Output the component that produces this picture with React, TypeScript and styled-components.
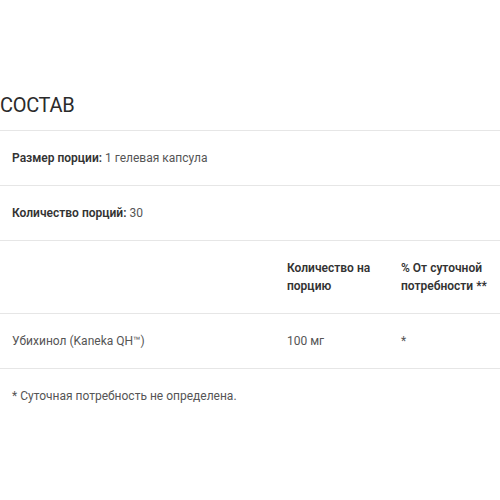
import React from 'react';
import styled, { createGlobalStyle } from 'styled-components';

const GlobalStyle = createGlobalStyle`
    body {
        margin: 0;
        background: #ffffff;
        font-family: Roboto, "Noto Sans", "Liberation Sans", sans-serif;
        color: #333333;
    }
`;

const Section = styled.section`
    width: 500px;
    padding-top: 92px;
`;

const Title = styled.h2`
    margin: 0;
    padding-bottom: 12px;
    font-size: 20px;
    line-height: 26px;
    font-weight: 400;
    color: #2b2b2b;
    letter-spacing: -0.3px;
    border-bottom: 1px solid #e6e6e6;
`;

const InfoRow = styled.div`
    padding: 18px 12px;
    font-size: 12px;
    line-height: 18px;
    color: #555555;
    border-bottom: 1px solid #e6e6e6;
`;

const Label = styled.b`
    font-weight: 600;
    color: #333333;
`;

const TableRow = styled.div<{ $head?: boolean }>`
    display: grid;
    grid-template-columns: 275px 114px 1fr;
    padding: 18px 0;
    font-size: 12px;
    line-height: 18px;
    font-weight: ${p => (p.$head ? 600 : 400)};
    color: ${p => (p.$head ? '#333333' : '#555555')};
    border-bottom: 1px solid #e6e6e6;
`;

const Cell = styled.div`
    padding: 0 12px;
`;

const Note = styled.p`
    margin: 0;
    padding: 18px 12px;
    font-size: 12px;
    line-height: 18px;
    color: #555555;
`;

const rows = [
    { name: 'Убихинол (Kaneka QH™)', amount: '100 мг', dv: '*' },
];

const App = () => {
    return (
        <Section>
            <GlobalStyle />
            <Title>СОСТАВ</Title>
            <InfoRow><Label>Размер порции:</Label> 1 гелевая капсула</InfoRow>
            <InfoRow><Label>Количество порций:</Label> 30</InfoRow>
            <TableRow $head>
                <Cell />
                <Cell>Количество на порцию</Cell>
                <Cell>% От суточной потребности **</Cell>
            </TableRow>
            {rows.map(r => (
                <TableRow key={r.name}>
                    <Cell>{r.name}</Cell>
                    <Cell>{r.amount}</Cell>
                    <Cell>{r.dv}</Cell>
                </TableRow>
            ))}
            <Note>* Суточная потребность не определена.</Note>
        </Section>
    );
};

export default App;
